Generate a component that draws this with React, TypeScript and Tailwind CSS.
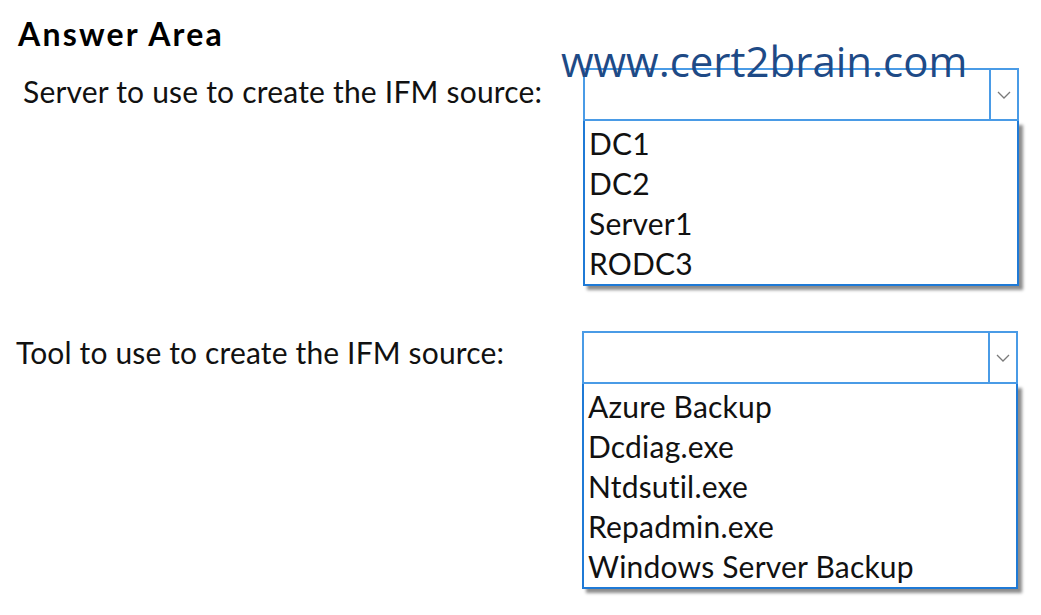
const calibri = { fontFamily: 'Lato, "Open Sans", sans-serif' };

function Chevron() {
  return (
    <svg width="14" height="8" viewBox="0 0 14 8" fill="none">
      <path d="M1 1l6 6 6-6" stroke="#7a7a7a" strokeWidth="1.3" />
    </svg>
  );
}

function Dropdown({ items, listHeight }: { items: string[]; listHeight: string }) {
  return (
    <div className="flex flex-col w-[436px]">
      <div className="flex h-[53px] border-2 border-[#4a9be6] bg-white">
        <div className="flex-1" />
        <div className="w-[28px] border-l-2 border-[#4a9be6] flex items-center justify-center">
          <Chevron />
        </div>
      </div>
      <div
        className={`${listHeight} border-2 border-t-0 border-[#1f7ad6] bg-white shadow-[4px_4px_3px_rgba(0,0,0,0.45)] pl-[4px] pt-[2px]`}
      >
        {items.map((item) => (
          <div key={item} className="h-[40px] text-[30px] leading-[40px] tracking-[0.2px] text-[#111]" style={calibri}>
            {item}
          </div>
        ))}
      </div>
    </div>
  );
}

export default function App() {
  return (
    <div className="relative w-[1041px] h-[615px] bg-white overflow-hidden">
      <div className="flex flex-col pt-[16px]">
        <div
          className="pl-[18px] h-[36px] text-[32px] leading-[36px] font-bold tracking-[2.2px] text-black"
          style={calibri}
        >
          Answer Area
        </div>
        <div className="flex flex-row mt-[16px]">
          <div
            className="w-[583px] pl-[23px] pt-[5px] text-[30px] leading-[36px] tracking-[0.2px] text-[#111]"
            style={calibri}
          >
            Server to use to create the IFM source:
          </div>
          <Dropdown items={['DC1', 'DC2', 'Server1', 'RODC3']} listHeight="h-[165px]" />
        </div>
        <div className="flex flex-row mt-[45px]">
          <div
            className="w-[582px] pl-[16px] pt-[3px] text-[30px] leading-[36px] tracking-[0.15px] text-[#111]"
            style={calibri}
          >
            Tool to use to create the IFM source:
          </div>
          <Dropdown
            items={['Azure Backup', 'Dcdiag.exe', 'Ntdsutil.exe', 'Repadmin.exe', 'Windows Server Backup']}
            listHeight="h-[205px]"
          />
        </div>
      </div>
      <div
        className="absolute left-[561px] top-[35px] text-[42px] leading-[52px] text-[#1e4a86]"
        style={{ fontFamily: '"Open Sans", sans-serif' }}
      >
        www.cert2brain.com
      </div>
    </div>
  );
}
